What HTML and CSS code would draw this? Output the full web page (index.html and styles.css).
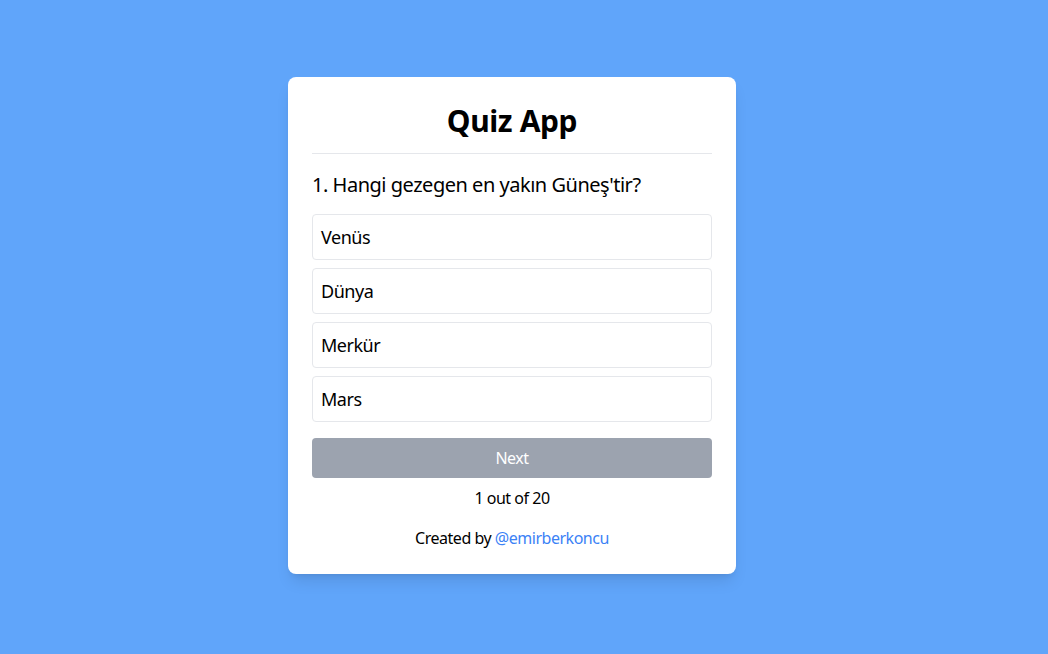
FILE: index.html
```html
<!DOCTYPE html>
<html lang="tr">
<head>
<meta charset="utf-8">
<title>Quiz App</title>
<link rel="stylesheet" href="styles.css">
</head>
<body>
<main class="page">
  <section class="card">
    <h1 class="title">Quiz App</h1>
    <h2 class="question">1. Hangi gezegen en yakın Güneş'tir?</h2>
    <ul class="options">
      <li class="option">Venüs</li>
      <li class="option">Dünya</li>
      <li class="option">Merkür</li>
      <li class="option">Mars</li>
    </ul>
    <button class="next" disabled>Next</button>
    <p class="progress">1 out of 20</p>
    <p class="credit">Created by <a href="#" class="credit-link">@emirberkoncu</a></p>
  </section>
</main>
</body>
</html>
```

FILE: styles.css
```css
* { box-sizing: border-box; }
html, body { margin: 0; padding: 0; }
body {
  background: #60a5fa;
  font-family: "Noto Sans", "Open Sans", sans-serif;
  color: #000;
  letter-spacing: -0.03em;
}
.page {
  width: 1024px;
  min-height: 650px;
  display: flex;
  align-items: center;
  justify-content: center;
}
.card {
  width: 448px;
  background: #fff;
  border-radius: 8px;
  padding: 24px;
  box-shadow: 0 10px 15px -3px rgba(0,0,0,0.1), 0 4px 6px -4px rgba(0,0,0,0.1);
}
.title {
  margin: 0;
  font-size: 30px;
  line-height: 36px;
  font-weight: 700;
  letter-spacing: -0.4px;
  text-align: center;
  padding-top: 2px;
  padding-bottom: 14px;
  border-bottom: 1px solid #e5e7eb;
}
.question {
  margin: 16px 0;
  padding-top: 1px;
  height: 28px;
  font-size: 20px;
  line-height: 28px;
  font-weight: 400;
}
.options {
  list-style: none;
  margin: 0;
  padding: 0;
  display: flex;
  flex-direction: column;
  gap: 8px;
}
.option {
  border: 1px solid #e5e7eb;
  border-radius: 4px;
  padding: 8px;
  font-size: 18px;
  line-height: 28px;
}
.next {
  display: block;
  width: 100%;
  margin-top: 16px;
  padding: 8px 0;
  border: none;
  border-radius: 4px;
  background: #9ca3af;
  color: #fff;
  font-family: inherit;
  letter-spacing: inherit;
  font-size: 16px;
  line-height: 24px;
}
.progress {
  margin: 8px 0 0;
  text-align: center;
  font-size: 16px;
  line-height: 24px;
}
.credit {
  margin: 16px 0 0;
  text-align: center;
  font-size: 16px;
  line-height: 24px;
}
.credit-link {
  color: #3b82f6;
  text-decoration: none;
}
```
